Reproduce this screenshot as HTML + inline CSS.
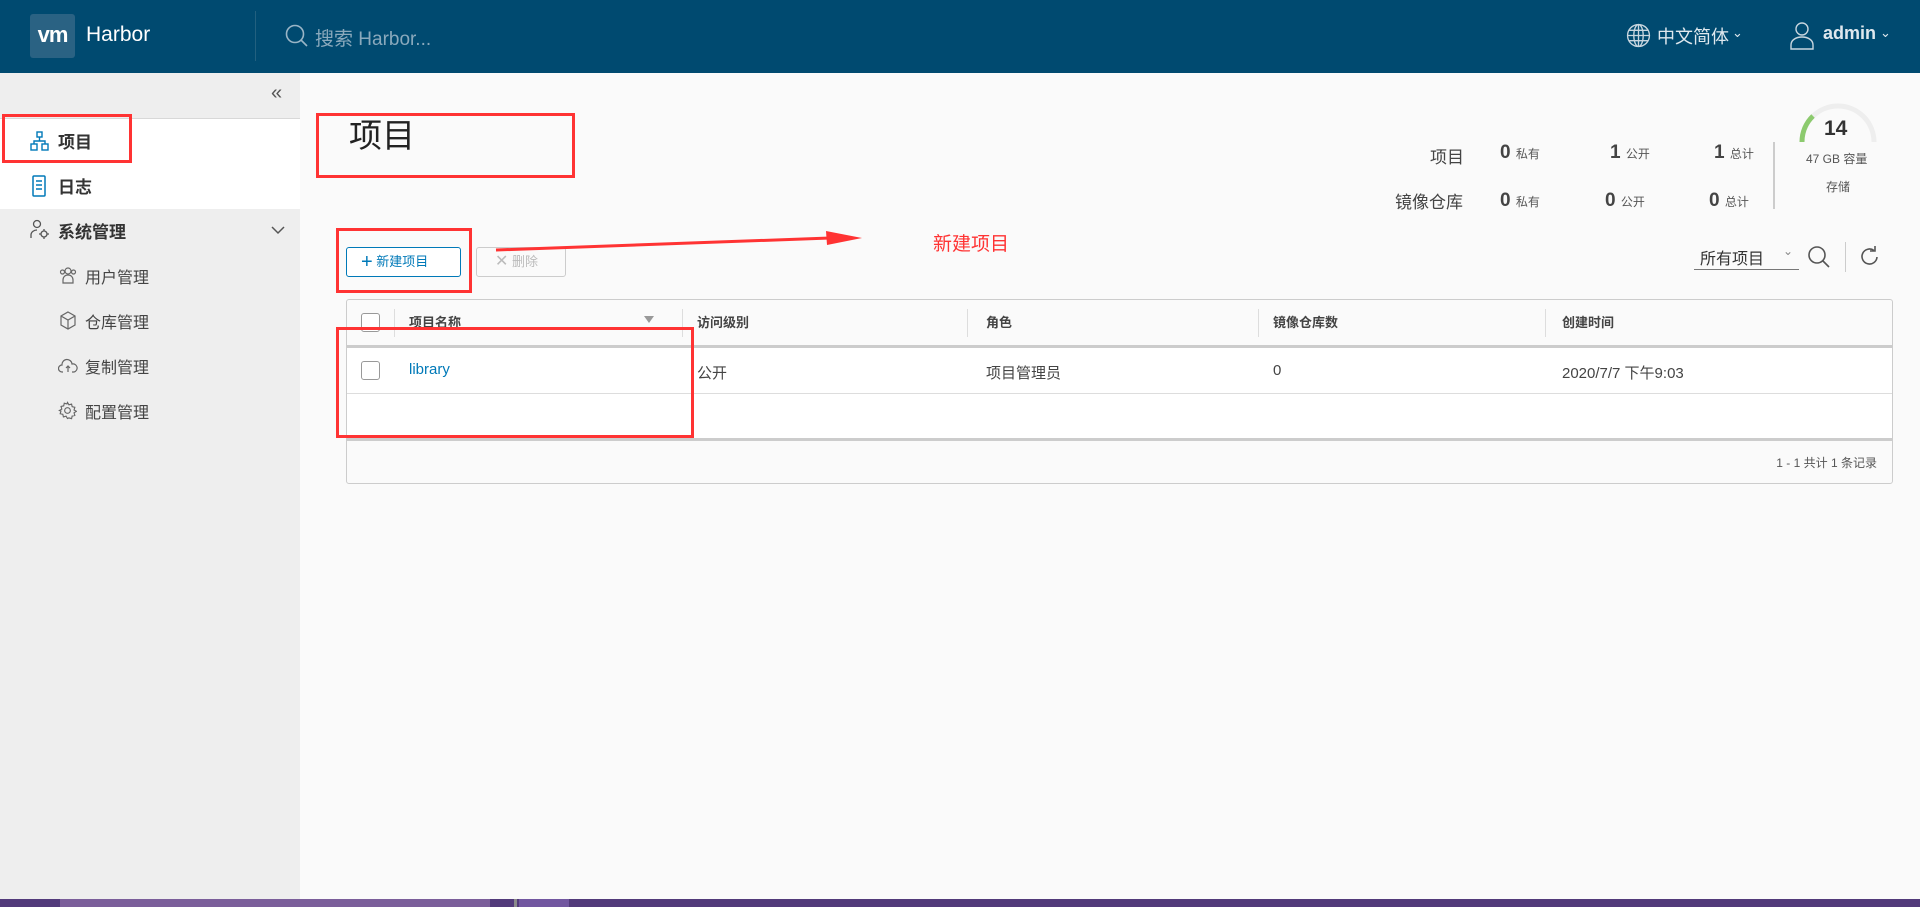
<!DOCTYPE html>
<html><head><meta charset="utf-8">
<style>
*{margin:0;padding:0;box-sizing:border-box}
body{width:1920px;height:907px;position:relative;overflow:hidden;background:#fafafa;font-family:"Liberation Sans","Noto Sans CJK SC",sans-serif;color:#333}
.a{position:absolute;white-space:nowrap}
.hdr{left:0;top:0;width:1920px;height:73px;background:#004a70}
.side{left:0;top:73px;width:300px;height:826px;background:#eee}
.red{position:absolute;border:3px solid #f33}
.sub{font-size:16px;color:#444}
.th{font-size:13px;font-weight:bold;color:#444;top:312px}
.td{font-size:15px;color:#444;top:362px}
.vs{position:absolute;top:309px;width:1px;height:28px;background:#ddd}
.cb{position:absolute;width:19px;height:19px;border:1px solid #999;border-radius:3px;background:#fff}
.num{font-size:19px;font-weight:bold;color:#444}
.sm{font-size:12px;color:#555;font-weight:normal}
</style></head><body>
<div class="a hdr"></div>
<div class="a" style="left:30px;top:14px;width:45px;height:44px;background:#2a6283;border-radius:3px;color:#fff;font-weight:bold;font-size:22px;line-height:42px;text-align:center;letter-spacing:-1px">vm</div>
<div class="a" style="left:86px;top:23px;color:#fff;font-size:21px">Harbor</div>
<div class="a" style="left:255px;top:11px;width:1px;height:50px;background:#22607f"></div>
<svg class="a" style="left:284px;top:23px" width="26" height="26" viewBox="0 0 26 26"><circle cx="11" cy="11" r="8.5" fill="none" stroke="#9ab5c6" stroke-width="1.6"/><path d="M17 17l6 6" stroke="#9ab5c6" stroke-width="1.6"/></svg>
<div class="a" style="left:315px;top:24px;color:#8aa9bc;font-size:19px">搜索 Harbor...</div>
<svg class="a" style="left:1626px;top:23px" width="25" height="25" viewBox="0 0 24 24" fill="none" stroke="#c8d6df" stroke-width="1.3"><circle cx="12" cy="12" r="10.5"/><ellipse cx="12" cy="12" rx="4.5" ry="10.5"/><path d="M1.5 12h21M3 7h18M3 17h18M12 1.5v21"/></svg>
<div class="a" style="left:1657px;top:23px;color:#dfe8ee;font-size:18px">中文简体</div>
<div class="a" style="left:1732px;top:25px;color:#dfe8ee;font-size:13px">&#8964;</div>
<svg class="a" style="left:1790px;top:21px" width="24" height="30" viewBox="0 0 24 30" fill="none" stroke="#c8d6df" stroke-width="1.4"><circle cx="12" cy="8" r="6"/><path d="M1 28v-4c0-5 5-8 11-8s11 3 11 8v4z"/></svg>
<div class="a" style="left:1823px;top:23px;color:#dfe8ee;font-size:18px;font-weight:bold">admin</div>
<div class="a" style="left:1880px;top:25px;color:#dfe8ee;font-size:13px">&#8964;</div>

<div class="a side"></div>
<div class="a" style="left:271px;top:82px;font-size:20px;color:#555">&#171;</div>
<div class="a" style="left:0;top:118px;width:300px;height:1px;background:#d8d8d8"></div>
<div class="a" style="left:0;top:119px;width:300px;height:90px;background:#fff"></div>
<svg class="a" style="left:30px;top:131px" width="19" height="20" viewBox="0 0 19 20" fill="none" stroke="#0079b8" stroke-width="1.4"><rect x="7" y="1" width="5" height="5"/><rect x="1" y="13" width="6" height="6"/><rect x="12" y="13" width="6" height="6"/><path d="M9.5 6v4M4 13v-3h11v3"/></svg>
<div class="a" style="left:58px;top:128px;font-size:17px;font-weight:bold">项目</div>
<svg class="a" style="left:32px;top:175px" width="14" height="22" viewBox="0 0 14 22" fill="none" stroke="#0079b8" stroke-width="1.5"><rect x="1" y="1" width="12" height="20" rx="1"/><path d="M4 6h6M4 10h6M4 14h6"/></svg>
<div class="a" style="left:58px;top:173px;font-size:17px;font-weight:bold">日志</div>
<svg class="a" style="left:30px;top:219px" width="20" height="20" viewBox="0 0 20 20" fill="none" stroke="#555" stroke-width="1.3"><circle cx="7" cy="5" r="3.5"/><path d="M1 19v-3c0-3 3-5 6-5"/><circle cx="14" cy="15" r="3"/><path d="M14 10v2M14 18v2M9 15h2M17 15h2"/></svg>
<div class="a" style="left:58px;top:218px;font-size:17px;font-weight:bold">系统管理</div>
<svg class="a" style="left:271px;top:225px" width="14" height="10" viewBox="0 0 14 10"><path d="M1 2l6 6 6-6" fill="none" stroke="#555" stroke-width="1.5"/></svg>
<svg class="a" style="left:59px;top:266px" width="18" height="18" viewBox="0 0 18 18" fill="none" stroke="#666" stroke-width="1.2"><circle cx="9" cy="5" r="3"/><circle cx="3.5" cy="6" r="2"/><circle cx="14.5" cy="6" r="2"/><path d="M4 17v-3c0-3 2-5 5-5s5 2 5 5v3z"/></svg>
<div class="a sub" style="left:85px;top:264px">用户管理</div>
<svg class="a" style="left:59px;top:311px" width="18" height="20" viewBox="0 0 18 20" fill="none" stroke="#666" stroke-width="1.2"><path d="M9 1l7 4v9l-7 4-7-4V5zM2 5l7 4 7-4M9 9v9"/></svg>
<div class="a sub" style="left:85px;top:309px">仓库管理</div>
<svg class="a" style="left:58px;top:357px" width="20" height="17" viewBox="0 0 20 17" fill="none" stroke="#666" stroke-width="1.2"><path d="M5 15H4a3 3 0 0 1 0-7 5 5 0 0 1 10-1 4 4 0 0 1 2 8h-2M10 9v6M8 11l2-2 2 2"/></svg>
<div class="a sub" style="left:85px;top:354px">复制管理</div>
<svg class="a" style="left:58px;top:401px" width="19" height="19" viewBox="0 0 20 20" fill="none" stroke="#666" stroke-width="1.2"><circle cx="10" cy="10" r="3"/><path d="M10 1.5l1.5 2.5 2.8-.8.6 2.8 2.8.6-.8 2.8 2.5 1.5-2.5 1.5.8 2.8-2.8.6-.6 2.8-2.8-.8L10 18.5l-1.5-2.5-2.8.8-.6-2.8-2.8-.6.8-2.8L1.5 10 4 8.5l-.8-2.8 2.8-.6.6-2.8 2.8.8z"/></svg>
<div class="a sub" style="left:85px;top:399px">配置管理</div>
<div class="red" style="left:2px;top:114px;width:130px;height:49px"></div>

<div class="a" style="left:349px;top:109px;font-size:33px;color:#222">项目</div>
<div class="red" style="left:316px;top:113px;width:259px;height:65px"></div>

<div class="a" style="left:1430px;top:143px;font-size:17px;color:#444">项目</div>
<div class="a" style="left:1395px;top:188px;font-size:17px;color:#444">镜像仓库</div>
<div class="a num" style="left:1500px;top:142px">0 <span class="sm">私有</span></div>
<div class="a num" style="left:1610px;top:142px">1 <span class="sm">公开</span></div>
<div class="a num" style="left:1714px;top:142px">1 <span class="sm">总计</span></div>
<div class="a num" style="left:1500px;top:190px">0 <span class="sm">私有</span></div>
<div class="a num" style="left:1605px;top:190px">0 <span class="sm">公开</span></div>
<div class="a num" style="left:1709px;top:190px">0 <span class="sm">总计</span></div>
<div class="a" style="left:1773px;top:142px;width:2px;height:67px;background:#ccc"></div>
<svg class="a" style="left:1798px;top:100px" width="80" height="44" viewBox="0 0 80 44"><path d="M4 42A36 36 0 0 1 76 42" fill="none" stroke="#eee" stroke-width="5"/><path d="M4 42A36 36 0 0 1 15 16" fill="none" stroke="#8cca6e" stroke-width="5"/></svg>
<div class="a" style="left:1824px;top:117px;font-size:21px;font-weight:bold;color:#333">14</div>
<div class="a" style="left:1806px;top:150px;font-size:12px;color:#555">47 GB 容量</div>
<div class="a" style="left:1826px;top:178px;font-size:12px;color:#555">存储</div>

<div class="a" style="left:1700px;top:245px;font-size:16px;color:#333">所有项目</div>
<div class="a" style="left:1783px;top:244px;font-size:12px;color:#888">&#8964;</div>
<div class="a" style="left:1694px;top:269px;width:105px;height:1px;background:#777"></div>
<svg class="a" style="left:1807px;top:245px" width="24" height="24" viewBox="0 0 24 24" fill="none" stroke="#555" stroke-width="1.6"><circle cx="10" cy="10" r="8"/><path d="M16 16l6 6"/></svg>
<div class="a" style="left:1845px;top:242px;width:1px;height:30px;background:#ccc"></div>
<svg class="a" style="left:1860px;top:245px" width="20" height="22" viewBox="0 0 20 22" fill="none" stroke="#555" stroke-width="1.6"><path d="M17 12a7.5 7.5 0 1 1-3-6.5"/><path d="M15 1v5h-5"/></svg>

<div class="a" style="left:346px;top:247px;width:115px;height:30px;border:1px solid #0079b8;border-radius:3px;background:#fff;color:#0079b8;font-size:13px;line-height:28px;padding-left:14px"><span style="font-size:20px;vertical-align:-2px">+</span> 新建项目</div>
<div class="a" style="left:476px;top:247px;width:90px;height:30px;border:1px solid #ccc;border-radius:3px;color:#bbb;font-size:13px;line-height:28px;padding-left:18px"><span style="font-size:16px">✕</span> 删除</div>
<div class="red" style="left:336px;top:228px;width:136px;height:65px"></div>
<svg class="a" style="left:490px;top:228px" width="380" height="30" viewBox="0 0 380 30"><path d="M6 22L340 10" stroke="#f33" stroke-width="3"/><path d="M336 3L372 10 337 17z" fill="#f33"/></svg>
<div class="a" style="left:933px;top:229px;font-size:19px;color:#f33">新建项目</div>

<div class="a" style="left:346px;top:299px;width:1547px;height:185px;border:1px solid #ccc;border-radius:3px;background:#fafafa"></div>
<div class="a" style="left:347px;top:345px;width:1545px;height:3px;background:#ccc"></div>
<div class="a" style="left:347px;top:348px;width:1545px;height:90px;background:#fff"></div>
<div class="a" style="left:347px;top:393px;width:1545px;height:1px;background:#ddd"></div>
<div class="a" style="left:347px;top:438px;width:1545px;height:3px;background:#ccc"></div>
<div class="cb" style="left:361px;top:313px"></div>
<div class="vs" style="left:394px"></div>
<div class="a th" style="left:409px">项目名称</div>
<div class="a" style="left:644px;top:316px;width:0;height:0;border-left:5px solid transparent;border-right:5px solid transparent;border-top:7px solid #999"></div>
<div class="vs" style="left:682px"></div>
<div class="a th" style="left:697px">访问级别</div>
<div class="vs" style="left:967px"></div>
<div class="a th" style="left:986px">角色</div>
<div class="vs" style="left:1258px"></div>
<div class="a th" style="left:1273px">镜像仓库数</div>
<div class="vs" style="left:1545px"></div>
<div class="a th" style="left:1562px">创建时间</div>
<div class="cb" style="left:361px;top:361px"></div>
<div class="a td" style="left:409px;color:#0079b8;top:361px">library</div>
<div class="a td" style="left:697px">公开</div>
<div class="a td" style="left:986px">项目管理员</div>
<div class="a td" style="left:1273px">0</div>
<div class="a td" style="left:1562px">2020/7/7 下午9:03</div>
<div class="a" style="right:43px;top:454px;font-size:12px;color:#555">1 - 1 共计 1 条记录</div>
<div class="red" style="left:336px;top:327px;width:358px;height:111px"></div>

<div class="a" style="left:0;top:899px;width:1920px;height:8px;background:#523a7a"></div>
<div class="a" style="left:60px;top:899px;width:430px;height:8px;background:#7b5e9a"></div>
<div class="a" style="left:514px;top:899px;width:3px;height:8px;background:#8a8a8a"></div>
<div class="a" style="left:519px;top:899px;width:50px;height:8px;background:#7257a0"></div>
</body></html>
